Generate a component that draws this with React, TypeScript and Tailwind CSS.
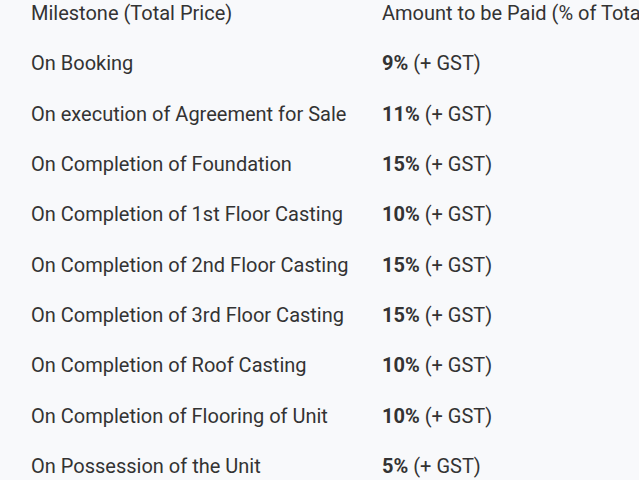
const rows: [string, string][] = [
  ['On Booking', '9%'],
  ['On execution of Agreement for Sale', '11%'],
  ['On Completion of Foundation', '15%'],
  ['On Completion of 1st Floor Casting', '10%'],
  ['On Completion of 2nd Floor Casting', '15%'],
  ['On Completion of 3rd Floor Casting', '15%'],
  ['On Completion of Roof Casting', '10%'],
  ['On Completion of Flooring of Unit', '10%'],
  ['On Possession of the Unit', '5%'],
]

export default function App() {
  return (
    <div className="w-[639px] h-[480px] overflow-hidden bg-[#f8f9fb] text-[#333333] font-['Roboto',sans-serif] text-[20px]">
      <div className="-mt-[12px] pl-[31px] grid grid-cols-[351px_1fr] auto-rows-[50.3px] items-center whitespace-nowrap">
        <div>Milestone (Total Price)</div>
        <div>Amount to be Paid (% of Total Price)</div>
        {rows.map(([label, pct]) => (
          <>
            <div key={label}>{label}</div>
            <div key={label + '-v'}>
              <span className="font-bold">{pct}</span> (+ GST)
            </div>
          </>
        ))}
      </div>
    </div>
  )
}
